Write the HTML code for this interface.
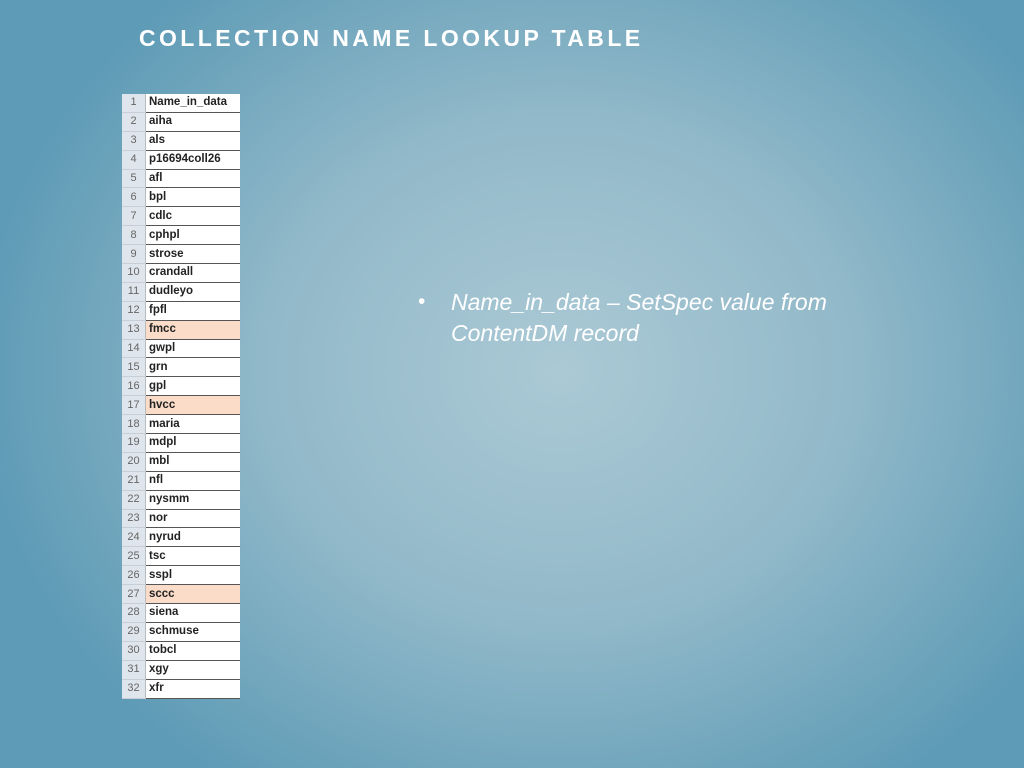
<!DOCTYPE html>
<html><head><style>
body{margin:0;width:1024px;height:768px;overflow:hidden;background:radial-gradient(ellipse 580px 500px at 560px 370px,#abc9d5 0%,#92b9c9 50%,#5e9bb6 100%);font-family:"Liberation Sans",sans-serif;position:relative}
h1{position:absolute;left:139px;top:25px;margin:0;color:#fff;font-size:23px;font-weight:bold;letter-spacing:3.4px;white-space:nowrap}
table{position:absolute;left:122px;top:94px;border-collapse:collapse;background:#fff;font-size:11.5px;font-weight:bold;color:#222}
td{height:17.9px;padding:0;border-bottom:1px solid #555;line-height:17px}
td.n{width:23px;background:#dfe5ec;color:#666;font-weight:normal;text-align:center;border-bottom:1px solid #c8ced6;font-size:11px}
td.v{width:91px;padding-left:3px;border-left:1px solid #bbb}
tr.p td.v{background:#fbdcc8}
.b{position:absolute;left:418px;top:290px;color:#fff;font-size:21px}
.t{position:absolute;left:451px;top:287px;color:#fff;font-size:23px;font-style:italic;line-height:31px;width:420px}
</style></head><body>
<h1>COLLECTION NAME LOOKUP TABLE</h1>
<table>
<tr><td class="n">1</td><td class="v">Name_in_data</td></tr>
<tr><td class="n">2</td><td class="v">aiha</td></tr>
<tr><td class="n">3</td><td class="v">als</td></tr>
<tr><td class="n">4</td><td class="v">p16694coll26</td></tr>
<tr><td class="n">5</td><td class="v">afl</td></tr>
<tr><td class="n">6</td><td class="v">bpl</td></tr>
<tr><td class="n">7</td><td class="v">cdlc</td></tr>
<tr><td class="n">8</td><td class="v">cphpl</td></tr>
<tr><td class="n">9</td><td class="v">strose</td></tr>
<tr><td class="n">10</td><td class="v">crandall</td></tr>
<tr><td class="n">11</td><td class="v">dudleyo</td></tr>
<tr><td class="n">12</td><td class="v">fpfl</td></tr>
<tr class="p"><td class="n">13</td><td class="v">fmcc</td></tr>
<tr><td class="n">14</td><td class="v">gwpl</td></tr>
<tr><td class="n">15</td><td class="v">grn</td></tr>
<tr><td class="n">16</td><td class="v">gpl</td></tr>
<tr class="p"><td class="n">17</td><td class="v">hvcc</td></tr>
<tr><td class="n">18</td><td class="v">maria</td></tr>
<tr><td class="n">19</td><td class="v">mdpl</td></tr>
<tr><td class="n">20</td><td class="v">mbl</td></tr>
<tr><td class="n">21</td><td class="v">nfl</td></tr>
<tr><td class="n">22</td><td class="v">nysmm</td></tr>
<tr><td class="n">23</td><td class="v">nor</td></tr>
<tr><td class="n">24</td><td class="v">nyrud</td></tr>
<tr><td class="n">25</td><td class="v">tsc</td></tr>
<tr><td class="n">26</td><td class="v">sspl</td></tr>
<tr class="p"><td class="n">27</td><td class="v">sccc</td></tr>
<tr><td class="n">28</td><td class="v">siena</td></tr>
<tr><td class="n">29</td><td class="v">schmuse</td></tr>
<tr><td class="n">30</td><td class="v">tobcl</td></tr>
<tr><td class="n">31</td><td class="v">xgy</td></tr>
<tr><td class="n">32</td><td class="v">xfr</td></tr>
</table>
<div class="b">•</div>
<div class="t">Name_in_data – SetSpec value from ContentDM record</div>
</body></html>
